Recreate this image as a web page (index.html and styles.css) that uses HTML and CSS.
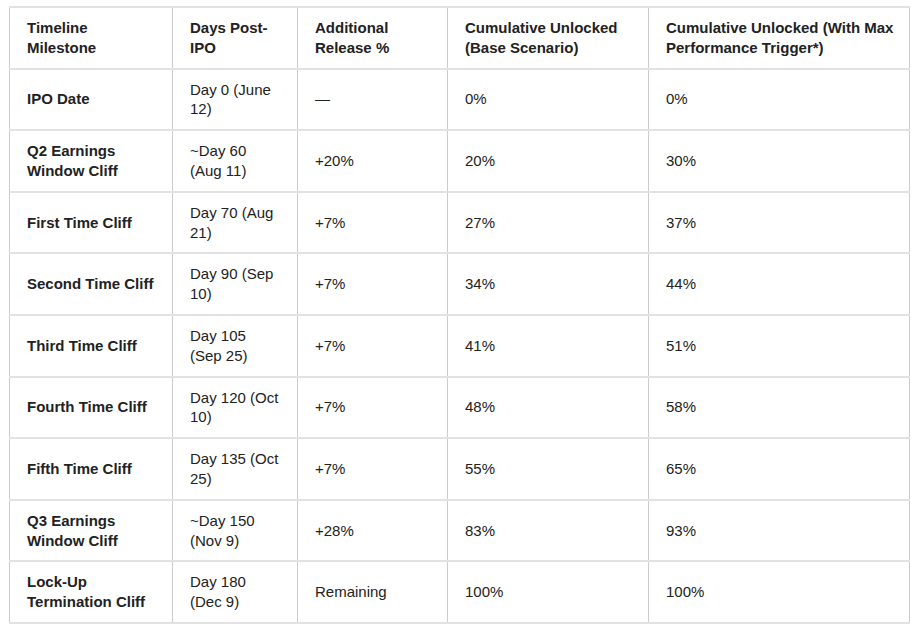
FILE: index.html
```html
<!DOCTYPE html>
<html>
<head>
<meta charset="utf-8">
<link rel="stylesheet" href="styles.css">
</head>
<body>
<table class="unlock">
<colgroup>
<col class="c1"><col class="c2"><col class="c3"><col class="c4"><col class="c5">
</colgroup>
<thead>
<tr>
<th>Timeline Milestone</th>
<th>Days Post-IPO</th>
<th>Additional Release %</th>
<th>Cumulative Unlocked (Base Scenario)</th>
<th>Cumulative Unlocked (With Max Performance Trigger*)</th>
</tr>
</thead>
<tbody>
<tr><td class="ms">IPO Date</td><td>Day 0 (June 12)</td><td>—</td><td>0%</td><td>0%</td></tr>
<tr><td class="ms">Q2 Earnings Window Cliff</td><td>~Day 60 (Aug 11)</td><td>+20%</td><td>20%</td><td>30%</td></tr>
<tr><td class="ms">First Time Cliff</td><td>Day 70 (Aug 21)</td><td>+7%</td><td>27%</td><td>37%</td></tr>
<tr><td class="ms">Second Time Cliff</td><td>Day 90 (Sep 10)</td><td>+7%</td><td>34%</td><td>44%</td></tr>
<tr><td class="ms">Third Time Cliff</td><td>Day 105 (Sep 25)</td><td>+7%</td><td>41%</td><td>51%</td></tr>
<tr><td class="ms">Fourth Time Cliff</td><td>Day 120 (Oct 10)</td><td>+7%</td><td>48%</td><td>58%</td></tr>
<tr><td class="ms">Fifth Time Cliff</td><td>Day 135 (Oct 25)</td><td>+7%</td><td>55%</td><td>65%</td></tr>
<tr><td class="ms">Q3 Earnings Window Cliff</td><td>~Day 150 (Nov 9)</td><td>+28%</td><td>83%</td><td>93%</td></tr>
<tr><td class="ms">Lock-Up Termination Cliff</td><td>Day 180 (Dec 9)</td><td>Remaining</td><td>100%</td><td>100%</td></tr>
</tbody>
</table>
</body>
</html>
```
FILE: styles.css
```css
html, body {
  margin: 0;
  padding: 0;
  background: #ffffff;
}
body {
  padding: 6px 9px;
  font-family: "Liberation Sans", Arial, sans-serif;
  color: #222222;
}
.unlock {
  border-collapse: collapse;
  table-layout: fixed;
  width: 900px;
  font-size: 15px;
  line-height: 19.8px;
}
.c1 { width: 163px; }
.c2 { width: 125px; }
.c3 { width: 150px; }
.c4 { width: 201px; }
.c5 { width: 261px; }
.unlock tr {
  border-top: 2px solid #e2e2e2;
  border-bottom: 2px solid #e2e2e2;
}
.unlock th,
.unlock td {
  border-left: 1px solid #cccccc;
  border-right: 1px solid #cccccc;
  padding: 10px 17px;
  text-align: left;
  vertical-align: middle;
}
.unlock th:last-child,
.unlock td:last-child {
  padding-right: 10px;
}
.unlock th,
.unlock td.ms {
  font-weight: bold;
}
```
